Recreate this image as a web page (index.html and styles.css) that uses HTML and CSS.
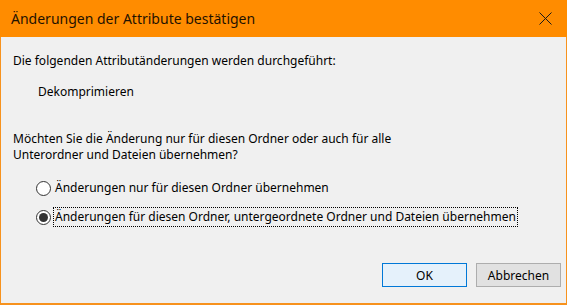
FILE: index.html
```html
<!DOCTYPE html>
<html lang="de">
<head>
<meta charset="utf-8">
<title>Änderungen der Attribute bestätigen</title>
<link rel="stylesheet" href="styles.css">
</head>
<body>
<div class="window">
  <div class="titlebar">
    <span class="title">Änderungen der Attribute bestätigen</span>
    <span class="close">
      <svg width="13" height="13" viewBox="0 0 13 13"><path d="M0.5 0.5 L12.5 12.5 M12.5 0.5 L0.5 12.5" stroke="#1a1a1a" stroke-width="1" fill="none"/></svg>
    </span>
  </div>
  <div class="content">
    <p class="line first">Die folgenden Attributänderungen werden durchgeführt:</p>
    <p class="line indent">Dekomprimieren</p>
    <p class="line question">Möchten Sie die Änderung nur für diesen Ordner oder auch für alle<br>Unterordner und Dateien übernehmen?</p>
    <div class="options">
      <label class="option"><span class="radio"></span><span class="label">Änderungen nur für diesen Ordner übernehmen</span></label>
      <label class="option"><span class="radio checked"></span><span class="label focus">Änderungen für diesen Ordner, untergeordnete Ordner und Dateien übernehmen</span></label>
    </div>
    <div class="buttons">
      <button class="btn default">OK</button>
      <button class="btn">Abbrechen</button>
    </div>
  </div>
</div>
</body>
</html>
```
FILE: styles.css
```css
* { box-sizing: border-box; }
html, body { margin: 0; padding: 0; }
body {
  width: 567px;
  height: 305px;
  background: #f0f0f0;
  font-family: "Noto Sans", "Open Sans", sans-serif;
  font-size: 12px;
  color: #000;
  overflow: hidden;
}
.window {
  width: 567px;
  height: 305px;
  border: 1px solid #f7921d;
  border-top: 0;
  border-bottom-width: 2px;
  background: #f0f0f0;
  display: flex;
  flex-direction: column;
}
.titlebar {
  height: 37px;
  margin: 0 -1px;
  background: #ff8c00;
  display: flex;
  align-items: center;
  padding-left: 11px;
  flex: none;
}
.title {
  font-size: 14px;
  color: #1f1200;
  flex: 1;
  padding-bottom: 1px;
}
.close {
  width: 46px;
  height: 37px;
  display: flex;
  align-items: center;
  justify-content: center;
}
.close svg { display: block; margin-left: 2px; }
.content {
  flex: 1;
  display: flex;
  flex-direction: column;
  padding: 15px 5px 16px 12px;
}
.line {
  margin: 0;
  line-height: 17px;
}
.indent { margin-top: 14px; padding-left: 25px; }
.question { margin-top: 31px; line-height: 16px; }
.options {
  margin-top: 16px;
  padding-left: 23px;
  display: flex;
  flex-direction: column;
  gap: 11px;
}
.option {
  display: flex;
  align-items: center;
  line-height: 18px;
}
.radio {
  width: 15px;
  height: 15px;
  border: 1px solid #333;
  border-radius: 50%;
  background: #fff;
  margin-right: 3px;
  display: flex;
  align-items: center;
  justify-content: center;
  flex: none;
}
.radio.checked::after {
  content: "";
  width: 9px;
  height: 9px;
  border-radius: 50%;
  background: #333;
}
.label { padding: 0 1px; }
.focus { outline: 1px dotted #000; outline-offset: 0; }
.buttons {
  margin-top: auto;
  display: flex;
  justify-content: flex-end;
  gap: 9px;
}
.btn {
  width: 85px;
  height: 24px;
  font-family: inherit;
  font-size: 12px;
  border: 1px solid #adadad;
  background: #e1e1e1;
  color: #000;
  padding: 0;
}
.btn.default {
  border-color: #0078d7;
  background: #e5f1fb;
}
```
